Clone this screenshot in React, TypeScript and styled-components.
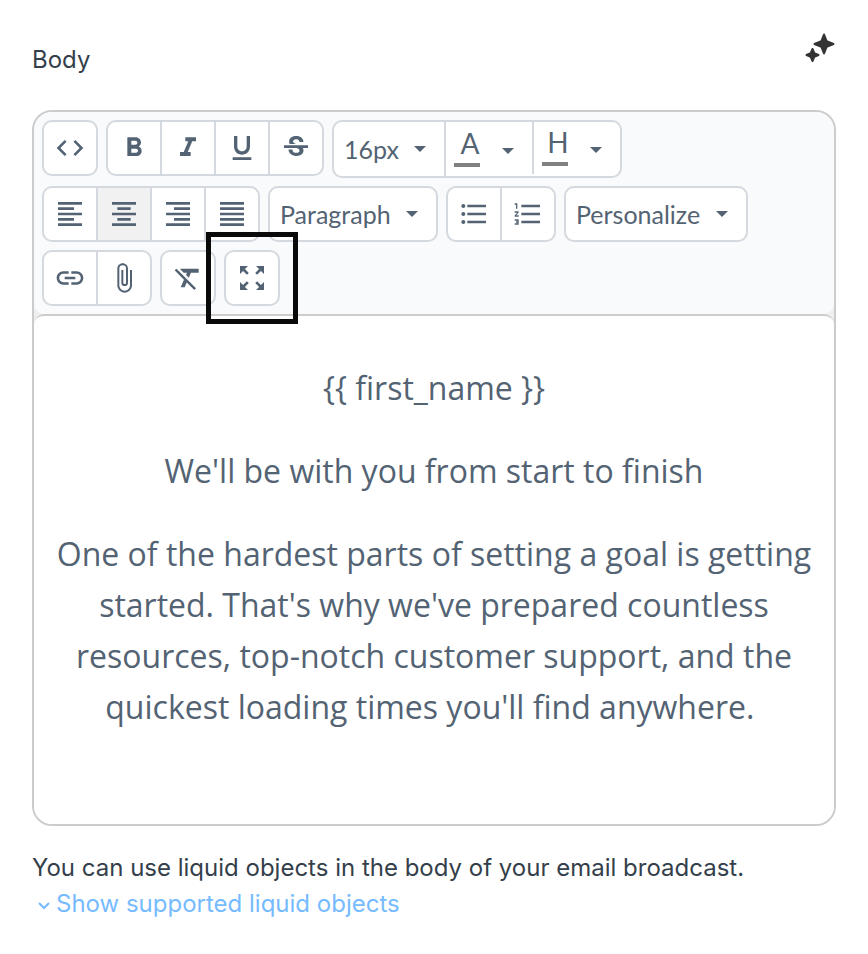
import React from "react";
import styled, { createGlobalStyle } from "styled-components";
import {
  MdAttachFile,
  MdCode,
  MdFormatAlignCenter,
  MdFormatAlignJustify,
  MdFormatAlignLeft,
  MdFormatAlignRight,
  MdFormatBold,
  MdFormatClear,
  MdFormatItalic,
  MdFormatListBulleted,
  MdFormatListNumbered,
  MdFormatUnderlined,
  MdLink,
  MdStrikethroughS,
  MdZoomOutMap,
} from "react-icons/md";
import type { IconType } from "react-icons";

const ink = "#536373";
const line = "#d3d9de";
const frame = "#cccccc";

const GlobalStyle = createGlobalStyle`
  *, *::before, *::after { box-sizing: border-box; }
  body { margin: 0; background: #fff; }
`;

const Page = styled.main`
  padding: 32px;
  font-family: Inter, "Liberation Sans", sans-serif;
  font-size: 24px;
  line-height: 36px;
  color: #343f4b;
`;

const FieldHeader = styled.header`
  display: flex;
  justify-content: space-between;
  align-items: flex-start;
  height: 78px;
`;

const FieldLabel = styled.h1`
  margin: 0;
  padding-top: 10px;
  font: inherit;
`;

const PlainButton = styled.button`
  display: flex;
  align-items: center;
  padding: 0;
  border: 0;
  background: none;
  color: inherit;
  font: inherit;
  cursor: pointer;
`;

const EditorFrame = styled.section`
  border: 2px solid ${frame};
  border-radius: 20px;
  background: #efefef;
`;

const Toolbar = styled.div`
  display: flex;
  flex-wrap: wrap;
  align-items: flex-start;
  gap: 8px;
  padding: 8px;
  border-radius: 18px 18px 10px 10px;
  background: #f8fafc;
`;

const Group = styled.div`
  position: relative;
  display: flex;
  align-items: flex-start;
  border: 2px solid ${line};
  border-radius: 10px;
  background: #fff;
`;

const ToolButton = styled(PlainButton)<{ $active?: boolean }>`
  justify-content: center;
  width: 52px;
  height: 52px;
  color: ${ink};
  background: ${(p) => (p.$active ? "#f1f1f1" : "transparent")};

  & + & {
    width: 54px;
    border-left: 2px solid ${line};
  }
`;

const ColorButton = styled(PlainButton)`
  justify-content: space-between;
  width: 88px;
  height: 52px;
  padding: 4px 18px 0 8px;
  border-left: 2px solid ${line};
  color: ${ink};

  &:first-of-type {
    height: 54px;
  }
`;

const Swatch = styled.span`
  display: flex;
  flex-direction: column;
  align-items: center;
  width: 26px;
  height: 36px;
  margin-bottom: 4px;
  padding-left: 6px;
  border-bottom: 4px solid #808080;
  font: 28px/24px Lato, sans-serif;
`;

const SelectBox = styled.label<{ $width: number; $tall?: boolean }>`
  display: grid;
  align-items: center;
  width: ${(p) => p.$width}px;
  height: ${(p) => (p.$tall ? 54 : 52)}px;
  color: ${ink};

  & > * {
    grid-area: 1 / 1;
  }
`;

const Select = styled.select`
  appearance: none;
  width: 100%;
  height: 100%;
  padding: 0 32px 0 10px;
  border: 0;
  border-radius: 8px;
  background: transparent;
  color: inherit;
  font: 25px/32px Lato, sans-serif;
`;

const CaretSlot = styled.span`
  display: flex;
  justify-self: end;
  padding-right: 18px;
  pointer-events: none;
`;

const FocusOutline = styled.div`
  position: absolute;
  inset: -20px;
  border: 5px solid #0a0a0a;
  pointer-events: none;
`;

const EditorBody = styled.div`
  min-height: 510px;
  padding: 46px 16px;
  border-top: 2px solid ${frame};
  border-radius: 10px 10px 18px 18px;
  background: #fff;
  outline: none;
  color: ${ink};
  font: 32px/51px "Open Sans", sans-serif;
  text-align: center;

  p {
    margin: 0 0 32px;
  }
`;

const HelpText = styled.p`
  margin: 24px 0 0;
`;

const HelpLink = styled.a`
  display: flex;
  align-items: center;
  gap: 6px;
  width: fit-content;
  padding-left: 6px;
  color: #76bbff;
  text-decoration: none;

  svg {
    margin-top: 4px;
  }
`;

const Caret = () => (
  <svg width="12" height="6" viewBox="0 0 12 6" fill="currentColor" aria-hidden="true">
    <path d="M0 0h12L6 6z" />
  </svg>
);

const Sparkles = () => (
  <svg width="32" height="32" viewBox="0 0 32 32" fill="#333" stroke="#333" strokeLinejoin="round" strokeWidth="2" aria-hidden="true">
    <path d="M20 2.500L22.700 9.300L29.500 12L22.700 14.700L20 21.500L17.300 14.700L10.500 12L17.300 9.300Z" />
    <path d="M8.500 17L10.300 21.200L14.500 23L10.300 24.800L8.500 29L6.700 24.800L2.500 23L6.700 21.200Z" />
  </svg>
);

const Chevron = () => (
  <svg width="12" height="8" viewBox="0 0 12 8" fill="none" stroke="currentColor" strokeWidth="2" aria-hidden="true">
    <path d="M1 1l5 5 5-5" />
  </svg>
);

type Tool = { label: string; icon: IconType; active?: boolean };

const Tools = ({ items, children }: { items: Tool[]; children?: React.ReactNode }) => (
  <Group>
    {items.map(({ label, icon: Icon, active }) => (
      <ToolButton key={label} type="button" aria-label={label} aria-pressed={active} $active={active}>
        <Icon size={32} />
      </ToolButton>
    ))}
    {children}
  </Group>
);

const Dropdown = ({ label, options, width, tall }: { label: string; options: string[]; width: number; tall?: boolean }) => (
  <SelectBox $width={width} $tall={tall}>
    <Select aria-label={label}>
      {options.map((o) => (
        <option key={o}>{o}</option>
      ))}
    </Select>
    <CaretSlot>
      <Caret />
    </CaretSlot>
  </SelectBox>
);

const ColorPicker = ({ label, letter }: { label: string; letter: string }) => (
  <ColorButton type="button" aria-label={label} aria-haspopup="true">
    <Swatch>{letter}</Swatch>
    <Caret />
  </ColorButton>
);

export default function App() {
  return (
    <Page>
      <GlobalStyle />
      <FieldHeader>
        <FieldLabel id="body-label">Body</FieldLabel>
        <PlainButton type="button" aria-label="Generate with AI">
          <Sparkles />
        </PlainButton>
      </FieldHeader>

      <EditorFrame>
        <Toolbar role="toolbar" aria-label="Formatting">
          <Tools items={[{ label: "Source code", icon: MdCode }]} />
          <Tools
            items={[
              { label: "Bold", icon: MdFormatBold },
              { label: "Italic", icon: MdFormatItalic },
              { label: "Underline", icon: MdFormatUnderlined },
              { label: "Strikethrough", icon: MdStrikethroughS },
            ]}
          />
          <Group>
            <Dropdown label="Font size" options={["16px"]} width={110} tall />
            <ColorPicker label="Text color" letter="A" />
            <ColorPicker label="Highlight color" letter="H" />
          </Group>
          <Tools
            items={[
              { label: "Align left", icon: MdFormatAlignLeft },
              { label: "Align center", icon: MdFormatAlignCenter, active: true },
              { label: "Align right", icon: MdFormatAlignRight },
              { label: "Justify", icon: MdFormatAlignJustify },
            ]}
          />
          <Group>
            <Dropdown label="Block format" options={["Paragraph"]} width={166} />
          </Group>
          <Tools
            items={[
              { label: "Bulleted list", icon: MdFormatListBulleted },
              { label: "Numbered list", icon: MdFormatListNumbered },
            ]}
          />
          <Group>
            <Dropdown label="Personalize" options={["Personalize"]} width={180} />
          </Group>
          <Tools
            items={[
              { label: "Link", icon: MdLink },
              { label: "Attach file", icon: MdAttachFile },
            ]}
          />
          <Tools items={[{ label: "Clear formatting", icon: MdFormatClear }]} />
          <Tools items={[{ label: "Full screen", icon: MdZoomOutMap }]}>
            <FocusOutline />
          </Tools>
        </Toolbar>
        <EditorBody role="textbox" aria-labelledby="body-label" aria-multiline="true" contentEditable suppressContentEditableWarning spellCheck={false}>
          <p>{"{{ first_name }}"}</p>
          <p>We'll be with you from start to finish</p>
          <p>
            One of the hardest parts of setting a goal is getting started. That's why we've prepared countless
            resources, top-notch customer support, and the quickest loading times you'll find anywhere.&nbsp;
          </p>
        </EditorBody>
      </EditorFrame>

      <HelpText>You can use liquid objects in the body of your email broadcast.</HelpText>
      <HelpLink href="#liquid-objects">
        <Chevron />
        Show supported liquid objects
      </HelpLink>
    </Page>
  );
}
